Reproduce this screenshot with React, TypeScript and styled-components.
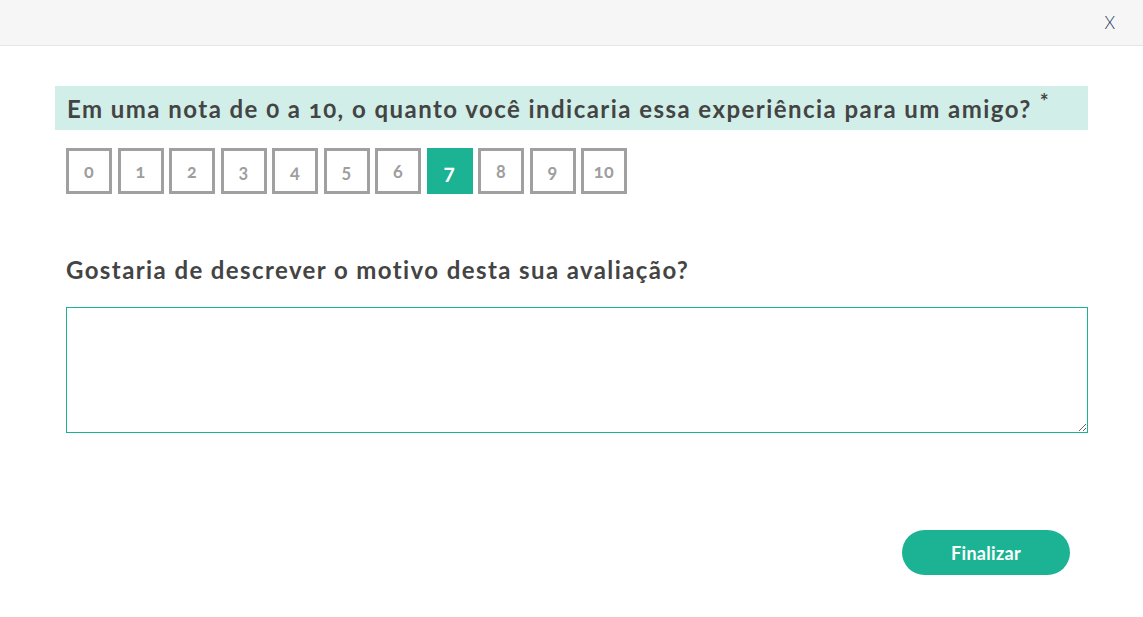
import React, { useState } from "react";
import styled, { createGlobalStyle } from "styled-components";

const GlobalStyle = createGlobalStyle`
  html, body {
    margin: 0;
    padding: 0;
    background: #ffffff;
    font-family: "Lato", "Open Sans", sans-serif;
  }
`;

const SCORES = [0, 1, 2, 3, 4, 5, 6, 7, 8, 9, 10];

export default function App(): JSX.Element {
  const [score, setScore] = useState<number>(7);

  return (
    <>
      <GlobalStyle />
      <Modal>
        <Header>
          <Close>X</Close>
        </Header>
        <Body>
          <QuestionBand>
            Em uma nota de 0 a 10, o quanto você indicaria essa experiência para um amigo?
            <Required>*</Required>
          </QuestionBand>
          <Content>
            <ScaleRow>
              {SCORES.map((value) => (
                <ScoreBox key={value} $active={value === score} onClick={() => setScore(value)}>
                  {value}
                </ScoreBox>
              ))}
            </ScaleRow>
            <Label>Gostaria de descrever o motivo desta sua avaliação?</Label>
            <Comment autoFocus />
            <Footer>
              <FinishButton>Finalizar</FinishButton>
            </Footer>
          </Content>
        </Body>
      </Modal>
    </>
  );
}

const Modal = styled.div`
  width: 1143px;
  height: 617px;
  background: #ffffff;
`;

const Header = styled.div`
  height: 45px;
  background: #f6f6f6;
  border-bottom: 1px solid #e6e6e6;
  display: flex;
  align-items: center;
  justify-content: flex-end;
  padding-right: 28px;
`;

const Close = styled.span`
  font-family: "Lato", sans-serif;
  font-weight: 300;
  font-size: 17px;
  color: #1f3a5a;
  cursor: pointer;
`;

const Body = styled.div`
  padding: 40px 55px 0;
`;

const QuestionBand = styled.div`
  height: 44px;
  display: flex;
  align-items: center;
  padding: 0 12px;
  background: #d1efe8;
  color: #444444;
  font-size: 24px;
  font-weight: 700;
  letter-spacing: 1.45px;
  font-variant-numeric: oldstyle-nums;
`;

const Required = styled.span`
  position: relative;
  top: -8px;
  margin-left: 8px;
  font-size: 21px;
  letter-spacing: 0;
`;

const Content = styled.div`
  padding-left: 11px;
`;

const ScaleRow = styled.div`
  display: flex;
  gap: 5.5px;
  margin-top: 18px;
`;

const ScoreBox = styled.button<{ $active: boolean }>`
  width: 46px;
  height: 46px;
  box-sizing: border-box;
  border: 3px solid ${({ $active }) => ($active ? "#1bb394" : "#a0a0a0")};
  background: ${({ $active }) => ($active ? "#1bb394" : "#ffffff")};
  color: ${({ $active }) => ($active ? "#ffffff" : "#9e9e9e")};
  font-family: "Lato", sans-serif;
  font-size: ${({ $active }) => ($active ? "21px" : "18px")};
  font-weight: 700;
  letter-spacing: 0.5px;
  font-variant-numeric: oldstyle-nums;
  padding: 0;
  cursor: pointer;
`;

const Label = styled.div`
  margin-top: 62px;
  color: #444444;
  font-size: 24px;
  font-weight: 700;
  line-height: 28px;
  letter-spacing: 1.4px;
`;

const Comment = styled.textarea`
  display: block;
  box-sizing: border-box;
  width: 1022px;
  height: 126px;
  margin-top: 23px;
  padding: 8px 18px;
  border: 1px solid #1bb394;
  outline: none;
  font-family: "Lato", sans-serif;
  font-size: 16px;
  color: #333333;
  resize: vertical;
`;

const Footer = styled.div`
  display: flex;
  justify-content: flex-end;
  padding-right: 18px;
  margin-top: 97px;
`;

const FinishButton = styled.button`
  width: 168px;
  height: 45px;
  border: none;
  border-radius: 23px;
  background: #1bb394;
  color: #ffffff;
  font-family: "Lato", sans-serif;
  font-size: 18px;
  font-weight: 700;
  letter-spacing: 0.3px;
  cursor: pointer;
`;
